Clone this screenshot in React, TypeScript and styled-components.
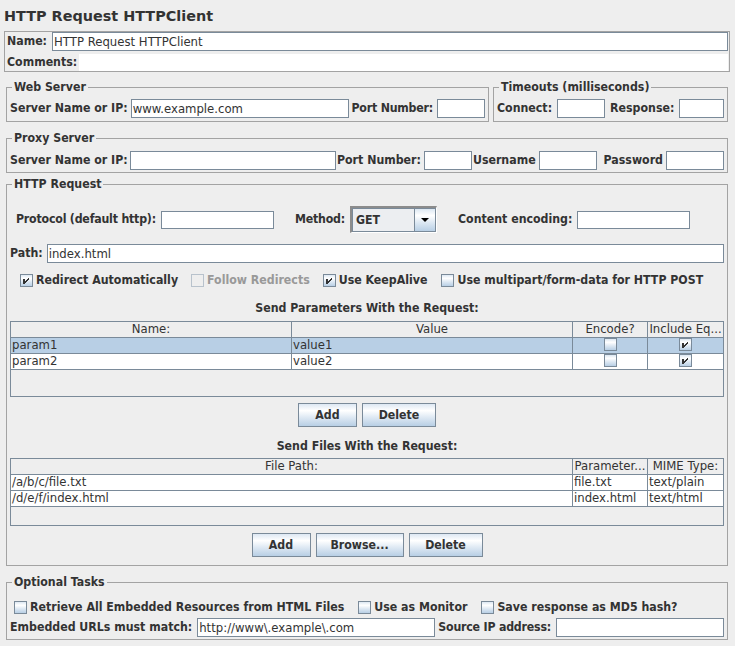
import React from "react";
import styled, { createGlobalStyle } from "styled-components";

const BOLD = `"DejaVu Sans Condensed", "DejaVu Sans", sans-serif`;
const REG = `"DejaVu Sans", sans-serif`;
const INK = "#333333";
const LINE = "#7a8a99";
const GROUP_LINE = "#a3a3a3";
const OCEAN = "linear-gradient(to bottom, #dde8f3 0%, #ffffff 30%, #dde8f3 62%, #b8cfe5 100%)";
const BOLD_SIZE = "12.25px";
const REG_SIZE = "11.7px";

const Global = createGlobalStyle`
  html, body { margin: 0; padding: 0; background: #eeeeee; }
  body { font-family: ${REG}; color: ${INK}; }
  * { box-sizing: border-box; }
`;

const Page = styled.div`
  width: 735px;
  height: 646px;
  overflow: hidden;
  background: #eeeeee;
  display: flex;
  flex-direction: column;
`;

const Title = styled.h1`
  margin: 0;
  height: 31px;
  padding: 8px 0 0 4px;
  font: bold 14.4px/17px ${REG};
  color: ${INK};
`;

const NamePanel = styled.div`
  margin: 0 5px 0 4px;
  border: 1px solid ${GROUP_LINE};
  padding: 0 1px 0 2px;
  display: flex;
  flex-direction: column;
  gap: 3px;
`;

const Row = styled.div<{ $h?: number; $gap?: number; $mt?: number; $ml?: number }>`
  display: flex;
  align-items: center;
  height: ${(p) => p.$h ?? 19}px;
  gap: ${(p) => p.$gap ?? 0}px;
  margin-top: ${(p) => p.$mt ?? 0}px;
  margin-left: ${(p) => p.$ml ?? 0}px;
`;

const Label = styled.span<{ $ml?: number; $mr?: number; $muted?: boolean; $tight?: boolean }>`
  flex: 0 0 auto;
  white-space: nowrap;
  font: bold ${BOLD_SIZE}/15px ${BOLD};
  font-stretch: semi-condensed;
  letter-spacing: ${(p) => (p.$tight ? "-0.2px" : "normal")};
  color: ${(p) => (p.$muted ? "#999999" : INK)};
  margin-left: ${(p) => p.$ml ?? 0}px;
  margin-right: ${(p) => p.$mr ?? 0}px;
`;

const Field = styled.input.attrs({ readOnly: true, type: "text" })<{ $w?: number; $h?: number }>`
  ${(p) => (p.$w ? `width:${p.$w}px; flex: 0 0 ${p.$w}px;` : `flex: 1 1 0; width: 0; min-width: 0;`)}
  height: ${(p) => p.$h ?? 19}px;
  border: 1px solid ${LINE};
  background: #ffffff;
  padding: 0 1px;
  margin: 0;
  font: ${REG_SIZE}/15px ${REG};
  color: ${INK};
  outline: none;
`;

const CommentsArea = styled.div`
  flex: 1 1 0;
  height: 17px;
  background: #ffffff;
`;

const ServerRow = styled.div`
  display: flex;
  gap: 4px;
  margin: 8px 7px 0 6px;
`;

const Group = styled.fieldset<{ $pt?: number; $pb?: number; $mt?: number }>`
  margin: ${(p) => p.$mt ?? 0}px 7px 0 6px;
  min-width: 0;
  border: 1px solid ${GROUP_LINE};
  padding: ${(p) => p.$pt ?? 4}px 3px ${(p) => p.$pb ?? 3}px 3px;
`;

const SubGroup = styled(Group)<{ $w?: number }>`
  margin: 0;
  ${(p) => (p.$w ? `flex: 0 0 ${p.$w}px;` : `flex: 1 1 0;`)}
`;

const Legend = styled.legend`
  padding: 0 2px;
  margin-left: 2px;
  font: bold ${BOLD_SIZE}/15px ${BOLD};
  font-stretch: semi-condensed;
  color: ${INK};
`;

const Caption = styled.div<{ $mt: number }>`
  margin-top: ${(p) => p.$mt}px;
  height: 16px;
  text-align: center;
  font: bold ${BOLD_SIZE}/16px ${BOLD};
  font-stretch: semi-condensed;
  color: ${INK};
`;

const Box = styled.span<{ $disabled?: boolean }>`
  flex: 0 0 13px;
  width: 13px;
  height: 13px;
  display: inline-flex;
  align-items: center;
  justify-content: center;
  border: 1px solid ${(p) => (p.$disabled ? "#b8c2cc" : LINE)};
  background: ${(p) => (p.$disabled ? "#eeeeee" : OCEAN)};
  vertical-align: middle;
`;

const CheckItem = styled.span<{ $ml?: number }>`
  display: inline-flex;
  align-items: center;
  gap: 3px;
  margin-left: ${(p) => p.$ml ?? 0}px;
`;

function Check({ checked, disabled }: { checked?: boolean; disabled?: boolean }) {
  return (
    <Box $disabled={disabled}>
      {checked && (
        <svg width="11" height="11" viewBox="0 0 11 11" shapeRendering="crispEdges">
          <rect x="2" y="4" width="2" height="5" fill="#333333" />
          <path d="M4 6 L8 2 L8 4 L4 8 Z" fill="#333333" />
        </svg>
      )}
    </Box>
  );
}

function CheckLabel({ text, checked, disabled, ml }: { text: string; checked?: boolean; disabled?: boolean; ml?: number }) {
  return (
    <CheckItem $ml={ml}>
      <Check checked={checked} disabled={disabled} />
      <Label $muted={disabled}>{text}</Label>
    </CheckItem>
  );
}

const Combo = styled.div`
  flex: 0 0 87px;
  width: 87px;
  height: 27px;
  border-style: solid;
  border-width: 2px 1px 1px 2px;
  border-color: #8c8c8c #ffffff #ffffff #8c8c8c;
  display: flex;
`;

const ComboInner = styled.div`
  flex: 1;
  display: flex;
  border: 1px solid ${LINE};
  background: #eceef1;
`;

const ComboText = styled.span`
  flex: 1;
  padding-left: 3px;
  display: flex;
  align-items: center;
  font: bold ${BOLD_SIZE}/15px ${BOLD};
  font-stretch: semi-condensed;
  color: ${INK};
`;

const ComboArrow = styled.span`
  flex: 0 0 21px;
  display: flex;
  align-items: center;
  justify-content: center;
  border-left: 1px solid ${LINE};
  background: ${OCEAN};
`;

const TableBox = styled.div<{ $h: number; $mt: number }>`
  margin-top: ${(p) => p.$mt}px;
  height: ${(p) => p.$h}px;
  border: 1px solid ${LINE};
  background: #eeeeee;
  overflow: hidden;
`;

const Grid = styled.table`
  width: 100%;
  table-layout: fixed;
  border-collapse: separate;
  border-spacing: 0;
  font: ${REG_SIZE}/15px ${REG};
  color: ${INK};
`;

const Th = styled.th<{ $w?: number }>`
  ${(p) => (p.$w ? `width: ${p.$w}px;` : "")}
  height: 16px;
  padding: 0 1px;
  font-weight: normal;
  text-align: center;
  white-space: nowrap;
  overflow: hidden;
  background: #eeeeee;
  border-right: 1px solid ${LINE};
  border-bottom: 1px solid ${LINE};
  &:last-child { border-right: none; }
`;

const Td = styled.td<{ $sel?: boolean; $center?: boolean }>`
  height: 16px;
  padding: 0 1px;
  white-space: nowrap;
  overflow: hidden;
  text-align: ${(p) => (p.$center ? "center" : "left")};
  background: ${(p) => (p.$sel ? "#b8cfe5" : "#ffffff")};
  border-right: 1px solid ${LINE};
  border-bottom: 1px solid ${LINE};
  &:last-child { border-right: none; }
`;

const CellBox = styled.span`
  display: inline-flex;
  vertical-align: middle;
  margin-top: -2px;
`;

const ButtonRow = styled.div<{ $mt: number }>`
  margin-top: ${(p) => p.$mt}px;
  display: flex;
  justify-content: center;
  gap: 5px;
`;

const Button = styled.button<{ $w: number }>`
  width: ${(p) => p.$w}px;
  height: 24px;
  padding: 0;
  margin: 0;
  border: 1px solid ${LINE};
  background: ${OCEAN};
  font: bold ${BOLD_SIZE}/15px ${BOLD};
  font-stretch: semi-condensed;
  color: ${INK};
`;

const params = [
  { name: "param1", value: "value1", encode: false, include: true, sel: true },
  { name: "param2", value: "value2", encode: false, include: true, sel: false },
];

const files = [
  { path: "/a/b/c/file.txt", param: "file.txt", mime: "text/plain" },
  { path: "/d/e/f/index.html", param: "index.html", mime: "text/html" },
];

export default function App() {
  return (
    <Page>
      <Global />
      <Title>HTTP Request HTTPClient</Title>

      <NamePanel>
        <Row $gap={5}>
          <Label>Name:</Label>
          <Field defaultValue="HTTP Request HTTPClient" />
        </Row>
        <Row $h={17} $gap={2}>
          <Label>Comments:</Label>
          <CommentsArea />
        </Row>
      </NamePanel>

      <ServerRow>
        <SubGroup $w={483} $pt={4} $pb={3}>
          <Legend>Web Server</Legend>
          <Row>
            <Label $mr={3}>Server Name or IP:</Label>
            <Field defaultValue="www.example.com" />
            <Label $ml={2} $mr={4} $tight>Port Number:</Label>
            <Field $w={48} />
          </Row>
        </SubGroup>
        <SubGroup $pt={4} $pb={3}>
          <Legend>Timeouts (milliseconds)</Legend>
          <Row>
            <Label $mr={5}>Connect:</Label>
            <Field $w={48} />
            <Label $ml={5} $mr={5}>Response:</Label>
            <Field />
          </Row>
        </SubGroup>
      </ServerRow>

      <Group $mt={9} $pt={5} $pb={2}>
        <Legend>Proxy Server</Legend>
        <Row>
          <Label $mr={2}>Server Name or IP:</Label>
          <Field />
          <Label $ml={1} $mr={3}>Port Number:</Label>
          <Field $w={48} />
          <Label $ml={1} $mr={3}>Username</Label>
          <Field $w={58} />
          <Label $ml={7} $mr={3}>Password</Label>
          <Field $w={58} />
        </Row>
      </Group>

      <Group $mt={4} $pt={0} $pb={8}>
        <Legend>HTTP Request</Legend>
        <Row $h={27} $mt={14} $ml={6} $gap={5}>
          <Label $tight>Protocol (default http):</Label>
          <Field $w={113} $h={18} />
          <Label $ml={16} $tight>Method:</Label>
          <Combo>
            <ComboInner>
              <ComboText>GET</ComboText>
              <ComboArrow>
                <svg width="8" height="4" viewBox="0 0 8 4">
                  <path d="M0 0 H8 L4 4 Z" fill="#000000" />
                </svg>
              </ComboArrow>
            </ComboInner>
          </Combo>
          <Label $ml={16}>Content encoding:</Label>
          <Field $w={113} $h={18} />
        </Row>
        <Row $mt={11} $gap={4}>
          <Label>Path:</Label>
          <Field defaultValue="index.html" />
        </Row>
        <Row $h={18} $mt={8} $ml={10}>
          <CheckLabel text="Redirect Automatically" checked />
          <CheckLabel text="Follow Redirects" disabled ml={13} />
          <CheckLabel text="Use KeepAlive" checked ml={13} />
          <CheckLabel text="Use multipart/form-data for HTTP POST" ml={14} />
        </Row>

        <Caption $mt={11}>Send Parameters With the Request:</Caption>
        <TableBox $h={76} $mt={5}>
          <Grid>
            <thead>
              <tr>
                <Th $w={281}>Name:</Th>
                <Th $w={281}>Value</Th>
                <Th $w={75}>Encode?</Th>
                <Th>Include Eq...</Th>
              </tr>
            </thead>
            <tbody>
              {params.map((r) => (
                <tr key={r.name}>
                  <Td $sel={r.sel}>{r.name}</Td>
                  <Td $sel={r.sel}>{r.value}</Td>
                  <Td $sel={r.sel} $center>
                    <CellBox>
                      <Check checked={r.encode} />
                    </CellBox>
                  </Td>
                  <Td $sel={r.sel} $center>
                    <CellBox>
                      <Check checked={r.include} />
                    </CellBox>
                  </Td>
                </tr>
              ))}
            </tbody>
          </Grid>
        </TableBox>
        <ButtonRow $mt={6}>
          <Button $w={59}>Add</Button>
          <Button $w={74}>Delete</Button>
        </ButtonRow>

        <Caption $mt={11}>Send Files With the Request:</Caption>
        <TableBox $h={68} $mt={4}>
          <Grid>
            <thead>
              <tr>
                <Th $w={562}>File Path:</Th>
                <Th $w={75}>Parameter...</Th>
                <Th>MIME Type:</Th>
              </tr>
            </thead>
            <tbody>
              {files.map((f) => (
                <tr key={f.path}>
                  <Td>{f.path}</Td>
                  <Td>{f.param}</Td>
                  <Td>{f.mime}</Td>
                </tr>
              ))}
            </tbody>
          </Grid>
        </TableBox>
        <ButtonRow $mt={7}>
          <Button $w={59}>Add</Button>
          <Button $w={88}>Browse...</Button>
          <Button $w={74}>Delete</Button>
        </ButtonRow>
      </Group>

      <Group $mt={9} $pt={8} $pb={2}>
        <Legend>Optional Tasks</Legend>
        <Row $ml={4}>
          <CheckLabel text="Retrieve All Embedded Resources from HTML Files" />
          <CheckLabel text="Use as Monitor" ml={14} />
          <CheckLabel text="Save response as MD5 hash?" ml={14} />
        </Row>
        <Row $mt={1}>
          <Label $mr={5}>Embedded URLs must match:</Label>
          <Field defaultValue="http://www\.example\.com" />
          <Label $ml={3} $mr={5} $tight>Source IP address:</Label>
          <Field $w={168} />
        </Row>
      </Group>
    </Page>
  );
}
